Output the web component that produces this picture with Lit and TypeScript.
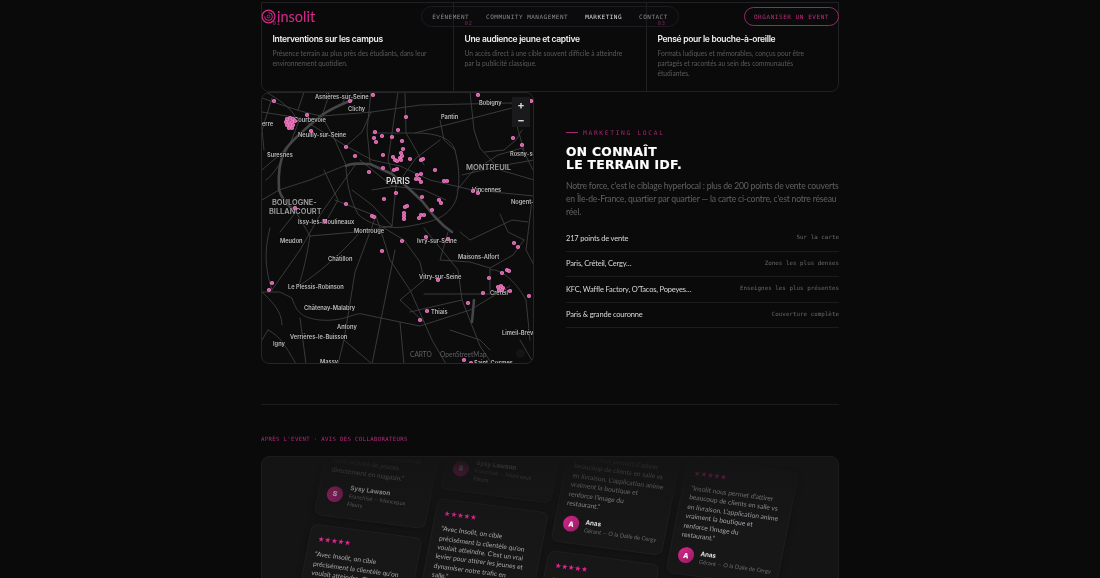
import { LitElement, html, css, svg } from "lit";
import { customElement } from "lit/decorators.js";

const MONO = css`"DejaVu Sans Mono", monospace`;

const features = [
  { n: "01", t: "Interventions sur les campus", d: "Présence terrain au plus près des étudiants, dans leur environnement quotidien." },
  { n: "02", t: "Une audience jeune et captive", d: "Un accès direct à une cible souvent difficile à atteindre par la publicité classique." },
  { n: "03", t: "Pensé pour le bouche-à-oreille", d: "Formats ludiques et mémorables, conçus pour être partagés et racontés au sein des communautés étudiantes." },
];
const rows = [
  ["217 points de vente", "Sur la carte"],
  ["Paris, Créteil, Cergy…", "Zones les plus denses"],
  ["KFC, Waffle Factory, O'Tacos, Popeyes…", "Enseignes les plus présentes"],
  ["Paris & grande couronne", "Couverture complète"],
];

const dots: [number, number][] = [
  [274,101],[350,101],[373,95],[307,115],[311,131],[346,147],[355,156],[375,132],[382,136],[374,138],[376,142],[392,137],[398,130],[383,155],[393,157],[395,160],[397,161],[400,158],[383,168],[369,172],[394,170],[397,169],[396,193],[384,199],[346,204],[372,216],[374,217],[295,208],[325,221],
  [478,95],[531,101],[406,117],[513,138],[522,145],[402,141],[403,149],[401,153],[402,156],[401,160],[410,159],[421,160],[423,159],[435,170],[417,175],[421,174],[416,179],[419,179],[421,182],[444,181],[447,181],[473,191],[478,193],[422,197],[439,200],[441,203],[405,207],[407,206],[432,210],[404,213],[404,216],[404,219],[419,218],[421,215],[424,215],
  [382,251],[272,283],[269,290],[402,241],[426,237],[448,239],[438,280],[514,243],[518,247],[489,278],[502,273],[507,270],[509,271],[510,291],[529,296],[483,293],[468,303],[427,311],[420,320],[464,360],[471,363],
  [287,119],[290,118],[293,119],[286,122],[289,122],[292,122],[295,121],[287,125],[290,125],[293,125],[289,128],[292,128],
  [498,287],[501,286],[503,288],[499,290],[502,290],
];

const roadsThick = [
  "M352 100 C342 104 332 108 322 115 C306 128 292 140 285 150 C279 162 278 176 279 190 C282 200 288 206 296 212",
  "M346 166 C352 162 362 164 370 164 L392 174 L406 186 L422 201 L434 216 L444 226 L452 232",
  "M474 300 L472 322",
];
const roads = [
  "M262 98 C285 106 300 112 322 116 L372 112 L420 105 L512 103",
  "M262 112 L300 118 L346 146 L372 160 L400 166 L430 180 L472 190 L534 196",
  "M371 92 L367 130 L370 162",
  "M405 92 L406 133 L416 150 L424 165",
  "M372 133 L415 133 C440 133 452 140 455 150 C460 170 460 185 456 200 C448 218 432 222 410 226 C392 230 370 226 358 214 C350 200 346 180 346 165",
  "M415 133 L512 108",
  "M440 120 L444 140 L455 150",
  "M300 118 C292 140 280 170 266 180",
  "M285 150 L262 170",
  "M355 165 L320 215 L300 250 L272 290",
  "M304 92 L298 110",
  "M266 92 C280 100 290 108 295 116",
  "M335 200 L376 216 L380 228 L390 260 L410 290 L432 340 L446 364",
  "M376 216 L355 272 L344 340 L338 364",
  "M360 232 C340 255 320 272 296 288",
  "M270 228 C264 250 265 270 272 290",
  "M310 236 C306 262 302 275 298 288",
  "M262 292 L280 292 L292 298 C296 310 300 318 320 320 C345 322 355 312 362 314 L400 322 L420 326 L470 310 L510 286",
  "M268 330 C280 336 285 345 296 364",
  "M262 292 C270 300 282 310 282 325",
  "M384 228 L404 240 L420 262 L424 280 L400 300 L424 322",
  "M424 228 L458 270 L462 300 L480 346 L492 364",
  "M424 294 L490 294 L490 268 L513 255 L524 240",
  "M490 270 C500 268 515 280 526 300 L530 340",
  "M460 232 L470 240 L512 220 L528 222",
  "M457 190 L472 172 L498 155 L522 148 L534 172",
  "M522 130 L516 140 L504 150 L485 152",
  "M480 148 L500 170 L534 180",
  "M462 175 L500 166 L534 160",
  "M520 340 L534 364",
  "M450 330 L480 340 L490 350",
  "M532 200 L526 250 L534 265",
  "M346 146 L362 132 L371 112",
  "M398 92 L392 133 L388 160 L396 186 L392 226",
  "M360 160 L392 186 L424 190 L446 200",
  "M372 190 L396 186 L416 158 L440 140",
  "M352 190 L372 205 L392 226",
  "M330 92 L322 116 L335 140 L346 165",
  "M324 170 L338 200 L328 218",
  "M296 212 L310 236 L356 232 L392 226",
  "M262 200 L279 190 L310 180 L346 165",
  "M296 212 L280 232",
  "M272 98 L262 130 L264 150",
  "M348 92 L342 104",
  "M470 92 L474 130 L480 148",
  "M512 103 L518 130 L524 150",
  "M400 322 L404 364",
  "M300 318 L306 364",
  "M344 340 L372 364",
  "M262 340 L268 330",
  "M395 250 L372 364",
  "M448 232 L440 260 L470 262 L490 268",
  "M500 214 L508 232 L524 240",
  "M462 300 L410 312",
];
const labels: [string, number, number, number?, string?][] = [
  ["Asnières-sur-Seine",315,99],["Clichy",348,111],["Courbevoie",294,122],["erre",262,126],["Neuilly-sur-Seine",298,137],["Suresnes",267,157],
  ["BOULOGNE-",272,205,7.4,"#a0a0a0"],["BILLANCOURT",269,214,7.4,"#a0a0a0"],["Issy-les-Moulineaux",298,224],["Meudon",280,243],["Châtillon",328,261],["Le Plessis-Robinson",288,289],["Châtenay-Malabry",304,310],["Antony",337,329],["Verrières-le-Buisson",290,339],["Igny",273,346],["Massy",320,364],["Montrouge",354,233],
  ["PARIS",386,184,8.4,"#dcdcdc"],["Bobigny",479,105],["Pantin",441,119],["MONTREUIL",466,170,7.6,"#a0a0a0"],["Rosny-sous-Bois",510,156],["Vincennes",472,192],["Nogent-sur-Marne",511,204],["Ivry-sur-Seine",417,243],["Maisons-Alfort",458,259],["Vitry-sur-Seine",419,279],["Créteil",490,295],["Thiais",431,314],["Limeil-Brévannes",502,335],["Saint-Cosmes",474,365],
];

const stars = "★★★★★";
const insolit = { q: "“Avec Insolit, on cible\nprécisément la clientèle qu'on\nvoulait atteindre. C'est un vrai\nlevier pour attirer les jeunes et\ndynamiser notre trafic en\nsalle.”", a: "S", n: "Sysy Lawson", r: "Franchisé — Monceaux\nFleurs" };
const sysy = { q: "“Un vrai levier d'acquisition et\nd'attractivité de jeunes\ndirectement en magasin.”", a: "S", n: "Sysy Lawson", r: "Franchisé — Monceaux\nFleurs" };
const anas = { q: "“Insolit nous permet d'attirer\nbeaucoup de clients en salle vs\nen livraison. L'application anime\nvraiment la boutique et\nrenforce l'image du\nrestaurant.”", a: "A", n: "Anas", r: "Gérant — O la Dalle de Cergy" };
const columns = [[sysy, insolit], [sysy, insolit], [anas, insolit], [anas]];

@customElement("app-root")
export class AppRoot extends LitElement {
  static styles = css`
    :host { display: block; width: 1100px; height: 578px; overflow: hidden; position: relative; background: #0a0a0b; font-family: Lato, sans-serif; color: #fff; }
    * { box-sizing: border-box; }
    .page { width: 578px; margin: 0 auto; padding-top: 2px; will-change: transform; }
    header { position: absolute; left: 261px; top: 0; width: 578px; height: 33px; display: flex; align-items: center; justify-content: space-between; z-index: 3; will-change: transform; }
    .logo { display: flex; align-items: center; gap: 1px; color: #d92a8c; font-family: Lato, sans-serif; font-size: 14.5px; font-weight: 400; }
    .logo svg { display: block; }
    nav { position: absolute; left: 160px; top: 6px; width: 258px; height: 21px; border: 1px solid #1c1c1e; border-radius: 11px; background: rgba(18,18,20,.3); display: flex; align-items: center; justify-content: center; gap: 17px; font: 6px ${MONO}; letter-spacing: .49px; color: #8a8a8a; white-space: nowrap; }
    nav b { font-weight: 400; color: #dcdcdc; }
    .cta { margin-left: auto; width: 95px; height: 19px; border: 1px solid #a0246c; border-radius: 10px; display: flex; align-items: center; justify-content: center; font: 6px ${MONO}; letter-spacing: .56px; color: #c02c80; white-space: nowrap; }
    .features { height: 90px; display: grid; grid-template-columns: 191px 193px 192px; border: 1px solid #212123; border-radius: 0 0 8px 8px; }
    .feature { padding: 17px 10.5px 0; border-left: 1px solid #212123; }
    .feature:first-child { border-left: 0; }
    .num { font: 5.8px ${MONO}; letter-spacing: .6px; color: #a3286f; height: 10px; }
    .feature h3 { margin: 3px 0 0; font: 600 8.5px/12px Inter, sans-serif; letter-spacing: -.3px; color: #f1f1f1; white-space: nowrap; }
    .feature p { margin: 3px 0 0; max-width: 168px; font-size: 6.65px; line-height: 10px; color: #5a5a5c; }
    .local { display: grid; grid-template-columns: 273px 273px; gap: 32px; }
    .map { position: relative; height: 272px; border: 1px solid #262628; border-radius: 8px; overflow: hidden; background: #0c0c0d; }
    .map svg { display: block; position: absolute; inset: -1px; }
    .zoom { position: absolute; left: 250px; top: 4px; width: 18px; height: 30px; background: #1a1a1c; display: flex; flex-direction: column; align-items: center; justify-content: space-around; font: 700 11px/14px Inter, sans-serif; color: #d8d8d8; }
    .attr { position: absolute; top: 257px; font-size: 6.6px; color: #606062; white-space: nowrap; }
    .attr.carto { left: 148px; }
    .attr.osm { left: 178px; }
    .round { position: absolute; left: 254px; top: 256px; width: 9px; height: 9px; border-radius: 50%; background: #151516; }
    .copy { padding-top: 36px; }
    .eyebrow { display: flex; align-items: center; gap: 5px; font: 6.3px ${MONO}; letter-spacing: 1.65px; color: #a3286f; height: 9px; }
    .eyebrow i { width: 12px; height: 1px; background: #a3286f; }
    h2 { margin: 9px 0 0; font: 700 12.3px/12.6px "DejaVu Sans", sans-serif; letter-spacing: .33px; color: #fff; -webkit-text-stroke: .2px #fff; }
    .copy p { margin: 9px 0 0; font-size: 8.6px; letter-spacing: -.2px; line-height: 13px; color: #616163; }
    .rows { margin-top: 7px; }
    .row { display: flex; justify-content: space-between; align-items: center; height: 25.5px; border-bottom: 1px solid #1c1c1e; font-size: 7.5px; letter-spacing: -.18px; color: #d8d8d8; }
    .row span { font: 5.8px ${MONO}; letter-spacing: .05px; color: #6a6a6c; margin-top: -2px; }
    hr { margin: 40px 0 0; height: 1px; border: 0; background: #1c1c1e; }
    .label { margin-top: 30px; height: 8px; font: 5.7px/8px ${MONO}; letter-spacing: .34px; color: #b02a7a; }
    .reviews { position: relative; margin-top: 13px; height: 260px; border: 1px solid #1c1c1e; border-radius: 8px; background: #141415; overflow: hidden; }
    .fade { position: absolute; inset: 0; -webkit-mask-image: linear-gradient(180deg, transparent 0, #000 65px); mask-image: linear-gradient(180deg, transparent 0, #000 65px); }
    .stage { position: absolute; left: -1px; top: -1px; width: 700px; display: flex; gap: 7px; padding-left: 63px; transform: rotate(7.6deg) skewX(-3.5deg); transform-origin: 0 0; }
    .col { width: 112px; flex: none; display: flex; flex-direction: column; gap: 9px; }
    .col.c0 { margin-top: -45px; }
    .col.c1 { margin-top: -87px; }
    .col.c2 { margin-top: -71px; }
    .col.c3 { margin-top: -55px; }
    .card { border: 1px solid #1f1f21; border-radius: 7px; background: #171718; padding: 10px 8px 11px; box-shadow: 0 1px 6px rgba(0,0,0,.25); }
    .stars { font: 7.4px/8px "DejaVu Sans", sans-serif; color: #e0268f; }
    .q { margin: 6px 0 0; font-size: 6.65px; line-height: 9.4px; color: #a9a9ab; white-space: pre; }
    .who { display: flex; align-items: center; gap: 6px; margin-top: 8px; }
    .av { width: 16px; height: 16px; flex: none; border-radius: 50%; background: linear-gradient(135deg, #e0268f, #8d1d5f); display: flex; align-items: center; justify-content: center; font: 800 7px Inter, sans-serif; color: #fff; }
    .who b { display: block; font: 600 6.3px/8px Inter, sans-serif; color: #eaeaea; }
    .who small { display: block; font-size: 5.7px; line-height: 7.5px; color: #6c6c6e; white-space: pre; }
  `;

  private mapSvg() {
    return html`<svg width="273" height="272" viewBox="261 92 273 272">
      <g fill="none" stroke-linecap="round" stroke-linejoin="round">
        ${roads.map((d) => svg`<path d=${d} stroke="#404042" stroke-width=".9"/>`)}
        ${roadsThick.map((d) => svg`<path d=${d} stroke="#464649" stroke-width="2.6"/>`)}
      </g>
      <g font-family="Inter, sans-serif" font-weight="600" stroke="#0c0c0d" stroke-width="1.2" paint-order="stroke">
        ${labels.map(([t, x, y, s, c]) => svg`<text x=${x} y=${y} font-size=${s ?? 5.7} fill=${c ?? "#bcbcbc"}>${t}</text>`)}
      </g>
      ${dots.map(([x, y]) => svg`<circle cx=${x} cy=${y} r="2.1" fill="#f07cc2"/><circle cx=${x} cy=${y} r=".7" fill="#a52c79"/>`)}
    </svg>`;
  }

  render() {
    return html`
      <header>
        <div class="logo">
          <svg width="15" height="15" viewBox="0 0 15 15" fill="none" stroke="#d92a8c">
            <circle cx="7.5" cy="7.5" r="6.4" stroke-width="1.2"/>
            <path d="M7.5 3.6a3.9 3.9 0 1 1-3.9 3.9" stroke-width="1"/>
            <circle cx="7.5" cy="7.5" r="1.4" stroke-width=".8"/>
          </svg>
          <span>insolit</span>
        </div>
        <nav><span>ÉVÉNEMENT</span><span>COMMUNITY MANAGEMENT</span><b>MARKETING</b><span>CONTACT</span></nav>
        <div class="cta">ORGANISER UN EVENT</div>
      </header>
      <div class="page">
        <section class="features">
          ${features.map((f) => html`<div class="feature"><div class="num">${f.n}</div><h3>${f.t}</h3><p>${f.d}</p></div>`)}
        </section>
        <section class="local">
          <div class="map">
            ${this.mapSvg()}
            <div class="zoom"><span>+</span><span>−</span></div>
            <span class="attr carto">CARTO</span><span class="attr osm">OpenStreetMap</span>
            <div class="round"></div>
          </div>
          <div class="copy">
            <div class="eyebrow"><i></i>MARKETING LOCAL</div>
            <h2>ON CONNAÎT<br />LE TERRAIN IDF.</h2>
            <p>Notre force, c'est le ciblage hyperlocal : plus de 200 points de vente couverts en Île-de-France, quartier par quartier — la carte ci-contre, c'est notre réseau réel.</p>
            <div class="rows">${rows.map(([a, b]) => html`<div class="row">${a}<span>${b}</span></div>`)}</div>
          </div>
        </section>
        <hr />
        <div class="label">APRÈS L'EVENT · AVIS DES COLLABORATEURS</div>
        <section class="reviews">
          <div class="fade"><div class="stage">
            ${columns.map((c, i) => html`<div class="col c${i}">
              ${c.map((r) => html`<article class="card">
                <div class="stars">${stars}</div>
                <p class="q">${r.q}</p>
                <div class="who"><div class="av">${r.a}</div><div><b>${r.n}</b><small>${r.r}</small></div></div>
              </article>`)}
            </div>`)}
          </div></div>
        </section>
      </div>
    `;
  }
}
